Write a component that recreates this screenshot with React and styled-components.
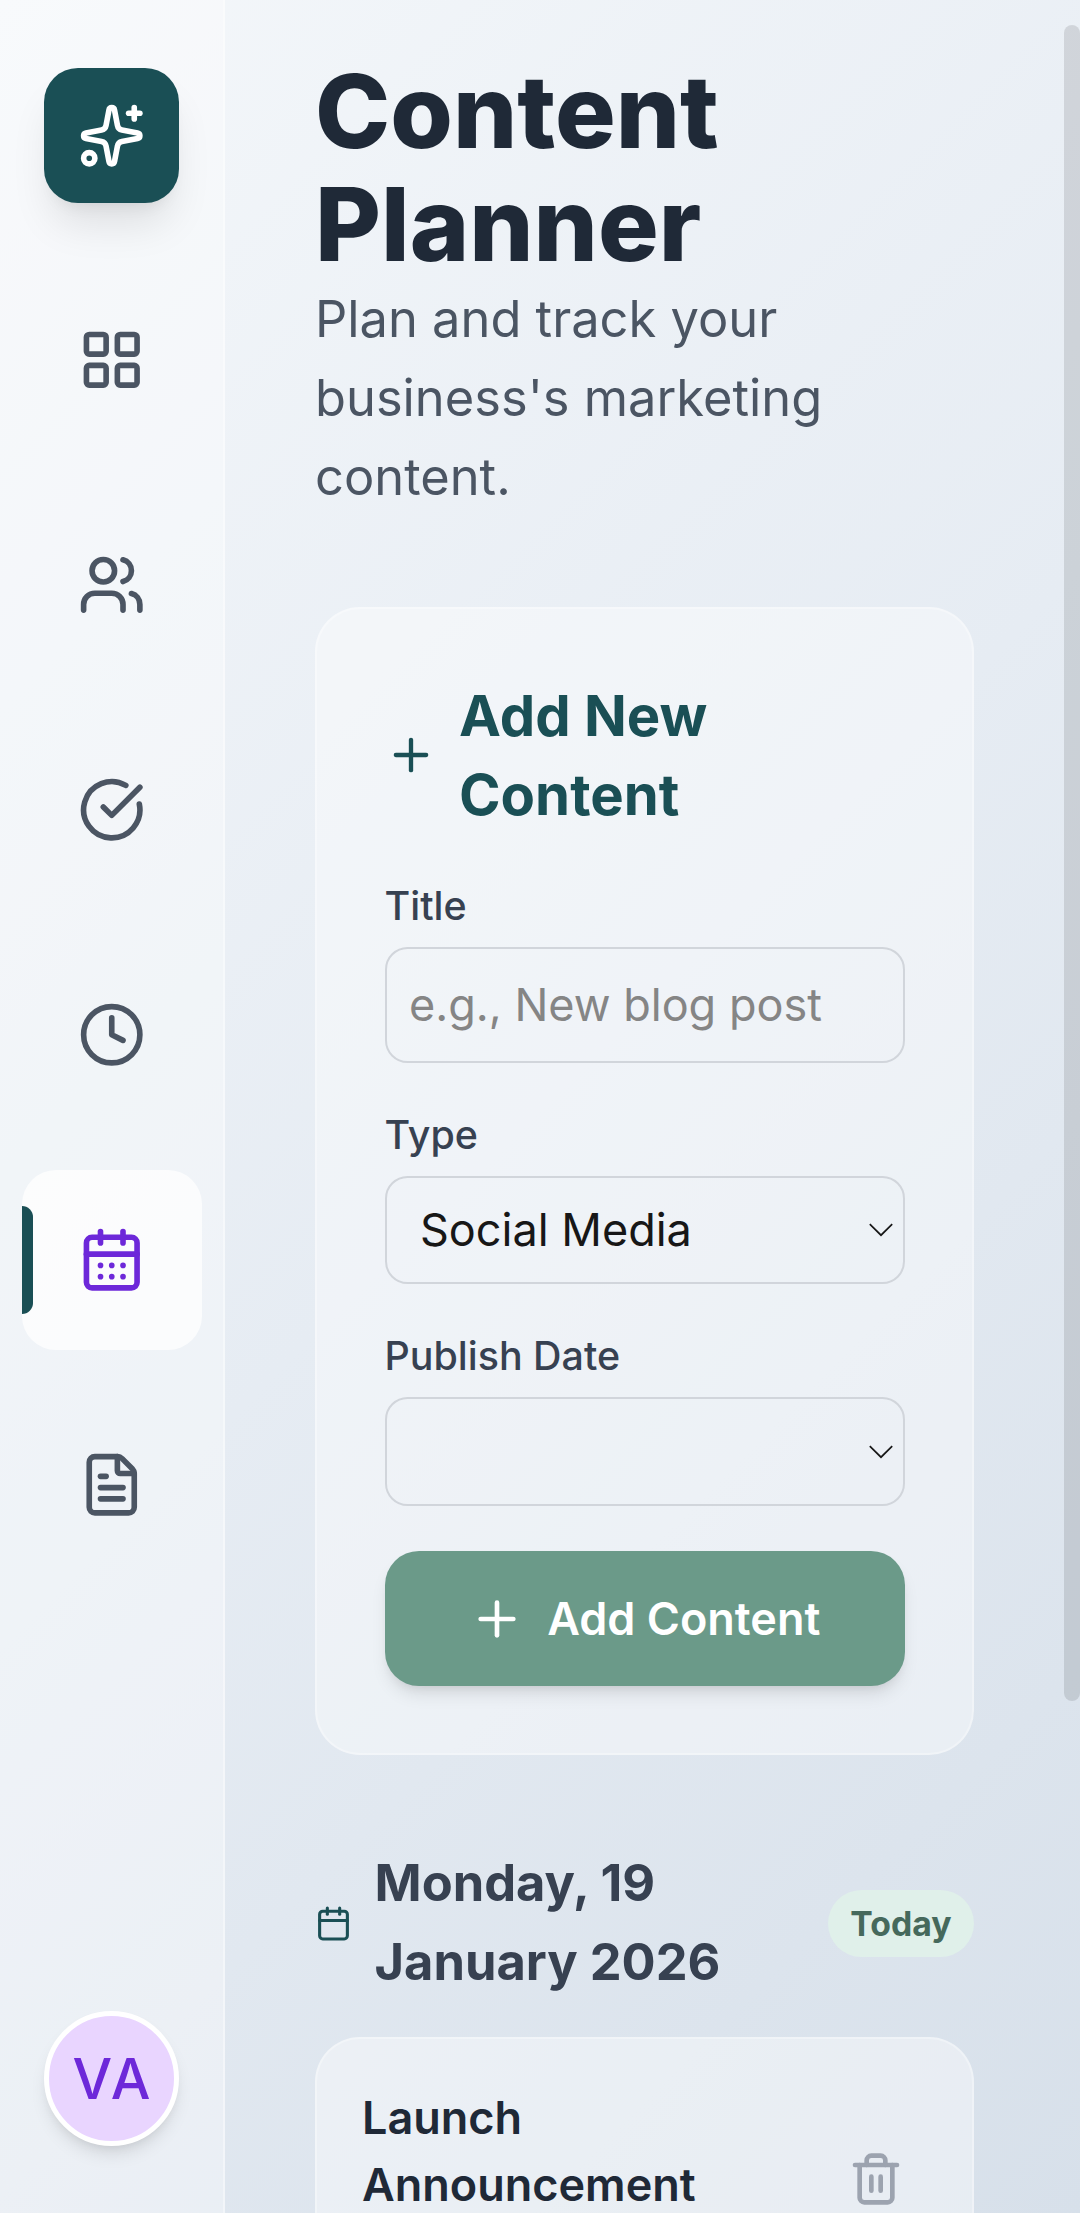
import styled, { createGlobalStyle } from "styled-components";
import {
  Sparkles,
  LayoutGrid,
  Users,
  CircleCheckBig,
  Clock,
  CalendarDays,
  Calendar,
  FileText,
  Plus,
  Trash2,
} from "lucide-react";

const navItems = [
  { id: "dashboard", Icon: LayoutGrid },
  { id: "clients", Icon: Users },
  { id: "tasks", Icon: CircleCheckBig },
  { id: "time", Icon: Clock },
  { id: "planner", Icon: CalendarDays },
  { id: "documents", Icon: FileText },
];

const Chevron = () => (
  <ChevronIcon viewBox="0 0 24 14">
    <path d="M0.8 1.2 L12 12.2 L23.2 1.2" />
  </ChevronIcon>
);

const Sidebar = ({ active }) => (
  <SidebarWrapper>
    <Logo>
      <Sparkles size={67.5} />
    </Logo>
    <Nav>
      {navItems.map(({ id, Icon }) => (
        <NavItem key={id} $active={id === active}>
          <Icon size={67.5} />
        </NavItem>
      ))}
    </Nav>
    <Avatar>VA</Avatar>
  </SidebarWrapper>
);

const ContentForm = () => (
  <FormCard>
    <FormTitle>
      <FormTitleIcon />
      <span>Add New Content</span>
    </FormTitle>
    <Field>
      <Label>Title</Label>
      <Input placeholder="e.g., New blog post" />
    </Field>
    <Field>
      <Label>Type</Label>
      <SelectBox $height={108}>
        Social Media
        <Chevron />
      </SelectBox>
    </Field>
    <Field>
      <Label>Publish Date</Label>
      <SelectBox $height={109}>
        <Chevron />
      </SelectBox>
    </Field>
    <SubmitButton>
      <Plus size={56} />
      Add Content
    </SubmitButton>
  </FormCard>
);

const App = () => {
  return (
    <>
      <GlobalStyle />
      <Layout>
        <Sidebar active="planner" />
        <Main>
          <Title>Content Planner</Title>
          <Subtitle>Plan and track your business's marketing content.</Subtitle>
          <ContentForm />
          <DayHeader>
            <DayIcon />
            <DayName>Monday, 19 January 2026</DayName>
            <Badge>Today</Badge>
          </DayHeader>
          <PostCard>
            <PostTitle>Launch Announcement</PostTitle>
            <Trash2 size={56} />
          </PostCard>
        </Main>
        <ScrollThumb />
      </Layout>
    </>
  );
};

const GlobalStyle = createGlobalStyle`
  * {
    box-sizing: border-box;
  }
  body {
    margin: 0;
    overflow: hidden;
    font-family: Inter, "Liberation Sans", sans-serif;
    color: #1f2937;
  }
  h1, h2, h3, p {
    margin: 0;
  }
`;

const Layout = styled.div`
  position: relative;
  display: flex;
  height: 2213px;
  overflow: hidden;
  background: linear-gradient(135deg, #f4f7fa 0%, #e6ecf3 50%, #d7e0ea 100%);
`;

const SidebarWrapper = styled.aside`
  display: flex;
  flex-direction: column;
  align-items: center;
  flex-shrink: 0;
  width: 225px;
  padding: 68px 0 67px;
  background: rgba(255, 255, 255, 0.36);
  border-right: 2px solid rgba(255, 255, 255, 0.4);
`;

const Logo = styled.div`
  display: flex;
  align-items: center;
  justify-content: center;
  width: 135px;
  height: 135px;
  margin-bottom: 67px;
  border-radius: 34px;
  background: #1a4f55;
  color: #fff;
  box-shadow: 0 28px 42px -8px rgba(0, 0, 0, 0.1),
    0 11px 17px -11px rgba(0, 0, 0, 0.1);
`;

const Nav = styled.nav`
  display: flex;
  flex-direction: column;
  gap: 45px;
  flex: 1;
`;

const NavItem = styled.div`
  position: relative;
  display: flex;
  align-items: center;
  justify-content: center;
  width: 180px;
  height: 180px;
  border-radius: 34px;
  color: ${({ $active }) => ($active ? "#6d28d9" : "#4b5563")};
  background: ${({ $active }) =>
    $active ? "rgba(255, 255, 255, 0.75)" : "transparent"};

  &::before {
    content: "";
    display: ${({ $active }) => ($active ? "block" : "none")};
    position: absolute;
    left: 0;
    top: 20%;
    width: 11px;
    height: 60%;
    border-radius: 0 11px 11px 0;
    background: #1a4f55;
  }
`;

const Avatar = styled.div`
  display: flex;
  align-items: center;
  justify-content: center;
  width: 135px;
  height: 135px;
  border: 5px solid #fff;
  border-radius: 50%;
  background: #e9d5ff;
  color: #6d28d9;
  font-size: 56px;
  font-weight: 540;
  letter-spacing: 2.5px;
  text-indent: 2.5px;
  box-shadow: 0 11px 17px -3px rgba(0, 0, 0, 0.1),
    0 6px 11px -6px rgba(0, 0, 0, 0.1);
`;

const Main = styled.main`
  flex: 1;
  min-width: 0;
  padding: 55px 106px 0 90px;
`;

const Title = styled.h1`
  font-size: 101.25px;
  line-height: 112.5px;
  font-weight: 800;
`;

const Subtitle = styled.p`
  font-size: 50.6px;
  line-height: 78.75px;
  color: #4b5563;
`;

const Card = styled.section`
  border: 2px solid rgba(255, 255, 255, 0.3);
  border-radius: 45px;
  background: rgba(255, 255, 255, 0.4);
`;

const FormCard = styled(Card)`
  height: 1148px;
  margin-top: 91px;
  padding: 67.5px 67.5px 0;
`;

const FormTitle = styled.h2`
  display: flex;
  align-items: center;
  gap: 22.5px;
  margin-bottom: 43.5px;
  font-size: 56.25px;
  line-height: 78.75px;
  font-weight: 700;
  color: #1a4f55;
`;

const FormTitleIcon = styled(Plus)`
  flex-shrink: 0;
  width: 52px;
  height: 56px;
  margin-bottom: 1px;
`;

const Field = styled.div`
  margin-bottom: 44.5px;
`;

const Label = styled.label`
  display: block;
  margin-bottom: 12.5px;
  font-size: 39.4px;
  line-height: 56.25px;
  font-weight: 500;
  color: #374151;
`;

const Input = styled.input`
  display: block;
  width: 100%;
  height: 116px;
  padding: 0 22.5px;
  border: 2px solid #d1d5db;
  border-radius: 22.5px;
  background: transparent;
  font-family: inherit;
  font-size: 45px;

  &::placeholder {
    color: #858585;
    opacity: 1;
  }
`;

const SelectBox = styled.div`
  display: flex;
  align-items: center;
  width: 100%;
  height: ${({ $height }) => $height}px;
  padding: 0 10px 0 33.5px;
  border: 2px solid #d1d5db;
  border-radius: 22.5px;
  font-size: 45px;
  color: #171717;
`;

const ChevronIcon = styled.svg`
  width: 24px;
  height: 14px;
  margin-left: auto;
  fill: none;
  stroke: #171717;
  stroke-width: 1.7;
`;

const SubmitButton = styled.button`
  display: flex;
  align-items: center;
  justify-content: center;
  gap: 22.5px;
  width: 100%;
  height: 135px;
  margin-top: 45px;
  padding: 0;
  border: none;
  border-radius: 34px;
  background: #6b9a89;
  color: #fff;
  font-family: inherit;
  font-size: 45px;
  font-weight: 600;
  box-shadow: 0 11px 17px -3px rgba(0, 0, 0, 0.1),
    0 6px 11px -6px rgba(0, 0, 0, 0.1);
`;

const DayHeader = styled.div`
  display: flex;
  align-items: center;
  margin-top: 89px;
`;

const DayIcon = styled(Calendar)`
  flex-shrink: 0;
  width: 37px;
  height: 45px;
  margin: 1px 22.5px 0 0;
  color: #1a4f55;
`;

const DayName = styled.h3`
  flex: 1;
  font-size: 50.6px;
  line-height: 78.75px;
  font-weight: 700;
  color: #374151;
`;

const Badge = styled.span`
  margin-top: 1px;
  padding: 11.25px 22.5px;
  border-radius: 34px;
  background: #e0f0ea;
  color: #46695c;
  font-size: 33.75px;
  line-height: 45px;
  font-weight: 700;
`;

const PostCard = styled(Card)`
  display: flex;
  align-items: center;
  justify-content: space-between;
  height: 284px;
  margin-top: 35px;
  padding: 0 68px 0 45px;
  color: #9ca3af;
`;

const PostTitle = styled.h4`
  align-self: flex-start;
  width: 360px;
  margin: 45px 0 0;
  font-size: 45px;
  line-height: 67.5px;
  font-weight: 600;
  color: #1f2937;
`;

// overlay scrollbar thumb of the content pane
const ScrollThumb = styled.div`
  position: absolute;
  top: 25px;
  right: 0;
  width: 16px;
  height: 1676px;
  border-radius: 8px;
  background: rgba(0, 0, 0, 0.11);
`;

export default App;
